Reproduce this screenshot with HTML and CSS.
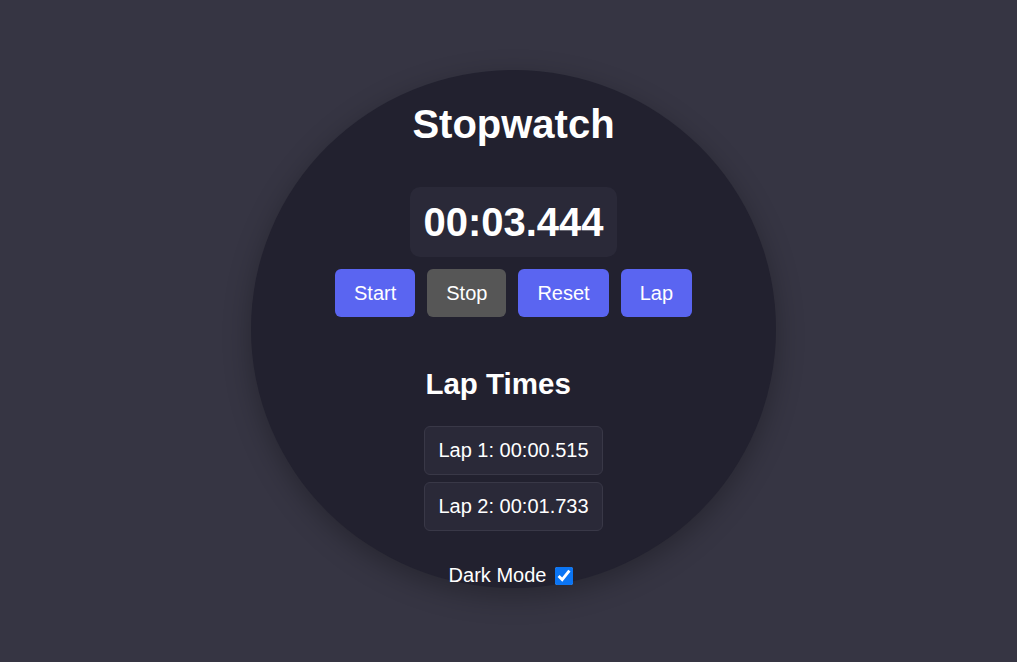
FILE: index.html
```html
<!DOCTYPE html>
<html lang="en">
<head>
<meta charset="utf-8">
<title>Stopwatch</title>
<link rel="stylesheet" href="styles.css">
</head>
<body>
  <main class="watch">
    <h1 class="title">Stopwatch</h1>
    <div class="display">00:03.444</div>
    <div class="controls">
      <button class="btn">Start</button>
      <button class="btn btn-stop">Stop</button>
      <button class="btn">Reset</button>
      <button class="btn">Lap</button>
    </div>
    <section class="laps">
      <h2 class="laps-title">Lap Times</h2>
      <ul class="lap-list">
        <li class="lap">Lap 1: 00:00.515</li>
        <li class="lap">Lap 2: 00:01.733</li>
      </ul>
    </section>
    <label class="mode">Dark Mode <input type="checkbox" class="mode-check" checked></label>
  </main>
</body>
</html>
```

FILE: styles.css
```css
html, body {
  margin: 0;
  height: 100%;
}
body {
  background: #363543;
  font-family: "Liberation Sans", Arial, sans-serif;
  color: #ffffff;
  padding: 70px 0 0 10px;
  box-sizing: border-box;
  display: flex;
  justify-content: center;
  align-items: flex-start;
}
.watch {
  width: 525px;
  height: 518px;
  border-radius: 50%;
  background: #22212f;
  box-shadow: 0 8px 28px rgba(0, 0, 0, 0.28);
  box-sizing: border-box;
  padding-top: 31px;
  display: flex;
  flex-direction: column;
  align-items: center;
}
.title {
  margin: 0;
  font-size: 40px;
  font-weight: bold;
  line-height: 46px;
}
.display {
  margin-top: 40px;
  background: #2a2938;
  border-radius: 10px;
  padding: 12px 13px;
  font-size: 40px;
  font-weight: bold;
  line-height: 46px;
}
.controls {
  margin-top: 12px;
  display: flex;
  gap: 12px;
}
.btn {
  font-family: "Liberation Sans", Arial, sans-serif;
  font-size: 20px;
  line-height: 23px;
  color: #ffffff;
  background: #5a65f1;
  border: none;
  border-radius: 6px;
  padding: 13px 19px 12px;
  cursor: pointer;
}
.btn-stop {
  background: #565656;
}
.laps {
  margin-top: 50px;
  display: flex;
  flex-direction: column;
}
.laps-title {
  margin: 0 0 0 1px;
  font-size: 29.5px;
  line-height: 34px;
  font-weight: bold;
}
.lap-list {
  list-style: none;
  margin: 25px 0 0;
  padding: 0;
  display: flex;
  flex-direction: column;
  gap: 7px;
}
.lap {
  background: #2a2938;
  border: 1px solid #393847;
  border-radius: 6px;
  padding: 12px 13px 12px 13px;
  font-size: 20px;
  line-height: 23px;
}
.mode {
  margin-top: 33px;
  padding-right: 5px;
  font-size: 20px;
  line-height: 23px;
  display: flex;
  align-items: center;
  gap: 9px;
}
.mode-check {
  width: 18px;
  height: 18px;
  margin: 0;
  accent-color: #0b75f4;
}
```
